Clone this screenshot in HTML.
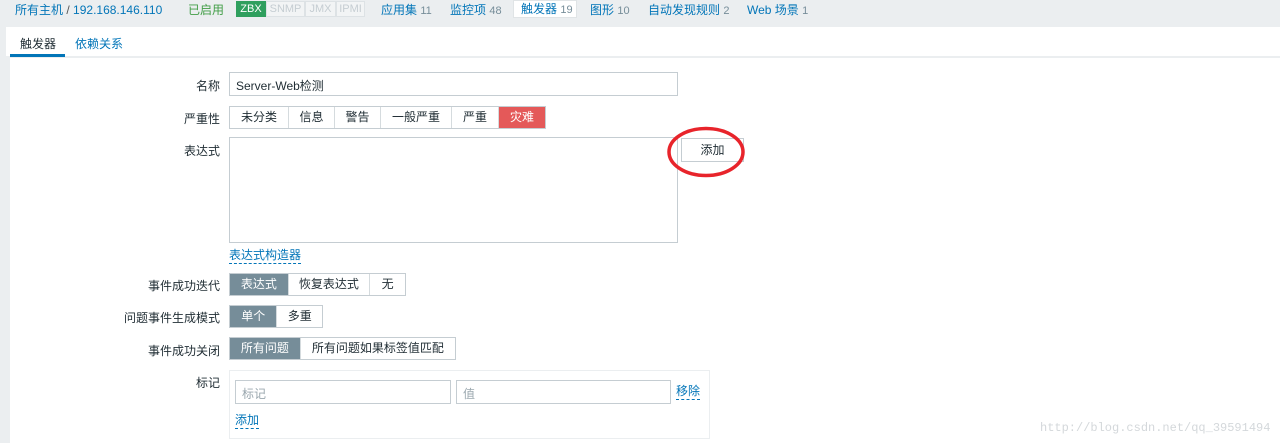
<!DOCTYPE html>
<html><head><meta charset="utf-8"><style>
*{box-sizing:border-box;margin:0;padding:0}
body{width:1280px;height:443px;overflow:hidden;background:#ebeef0;font-family:"Liberation Sans","Noto Sans CJK SC",sans-serif;font-size:12px;color:#1f2c33;position:relative}
.a{position:absolute;white-space:nowrap}
.lnk{color:#0275b8}
.n{color:#768d99;font-size:11px}
.lab{position:absolute;right:1060px;text-align:right}
.box{position:absolute;border:1px solid #c5cdd2;background:#fff}
.seg{position:absolute;height:23px;display:flex;border:1px solid #c5cdd2;background:#fff}
.seg span{border-right:1px solid #d5dbde;line-height:21px;text-align:center;display:block}
.seg span:last-child{border-right:0}
.on{background:#768d99;color:#fff}
</style></head><body>
<div class="a" style="top:2px;left:15px;line-height:16px">
<span class="lnk">所有主机</span> <span style="color:#555">/</span> <span class="lnk">192.168.146.110</span></div>
<div class="a" style="top:2px;left:188px;color:#429e47;line-height:16px">已启用</div>
<div class="a" style="top:1px;left:236px;height:16px;display:flex;font-size:11px;line-height:14px">
<span style="background:#2f9f5e;color:#fff;width:30px;text-align:center;border:1px solid #2f9f5e">ZBX</span>
<span style="color:#c5cdd2;border:1px solid #dde2e5;width:39px;text-align:center;background:#f2f4f5">SNMP</span>
<span style="color:#c5cdd2;border:1px solid #dde2e5;width:31px;text-align:center;background:#f2f4f5">JMX</span>
<span style="color:#c5cdd2;border:1px solid #dde2e5;width:29px;text-align:center;background:#f2f4f5">IPMI</span></div>
<div class="a lnk" style="top:2px;left:381px;line-height:16px">应用集 <span class="n">11</span></div>
<div class="a lnk" style="top:2px;left:450px;line-height:16px">监控项 <span class="n">48</span></div>
<div class="a" style="top:0px;left:513px;width:64px;height:18px;background:#fff;border:1px solid #e0e4e6;padding-left:7px;line-height:16px"><span class="lnk">触发器</span> <span class="n">19</span></div>
<div class="a lnk" style="top:2px;left:590px;line-height:16px">图形 <span class="n">10</span></div>
<div class="a lnk" style="top:2px;left:648px;line-height:16px">自动发现规则 <span class="n">2</span></div>
<div class="a lnk" style="top:2px;left:747px;line-height:16px">Web 场景 <span class="n">1</span></div>

<div class="a" style="top:27px;left:6px;width:1274px;height:30px;background:#fff;border-bottom:1px solid #ebeef0"></div>
<div class="a" style="top:35px;left:20px">触发器</div>
<div class="a" style="top:54px;left:10px;width:55px;height:3px;background:#0275b8"></div>
<div class="a lnk" style="top:35px;left:75px">依赖关系</div>
<div class="a" style="top:58px;left:10px;width:1270px;height:385px;background:#fff"></div>

<div class="lab" style="top:77px">名称</div>
<div class="box" style="left:229px;top:72px;width:449px;height:24px;padding:4px 6px">Server-Web检测</div>
<div class="lab" style="top:110px">严重性</div>
<div class="seg" style="left:229px;top:106px;width:317px">
<span style="width:59px">未分类</span><span style="width:46px">信息</span><span style="width:46px">警告</span><span style="width:71px">一般严重</span><span style="width:47px">严重</span><span style="width:46px;background:#e45959;color:#fff">灾难</span></div>
<div class="lab" style="top:142px">表达式</div>
<div class="box" style="left:229px;top:137px;width:449px;height:106px"></div>
<div class="box" style="left:681px;top:138px;width:63px;height:24px;text-align:center;line-height:22px;border-color:#c5cdd2">添加</div>
<svg class="a" style="left:665px;top:125px" width="82" height="54"><ellipse cx="41" cy="27" rx="37" ry="23.5" fill="none" stroke="#e8242b" stroke-width="3.5"/></svg>
<div class="a lnk" style="left:229px;top:248px;border-bottom:1px dashed #0275b8;line-height:15px">表达式构造器</div>

<div class="lab" style="top:277px">事件成功迭代</div>
<div class="seg" style="left:229px;top:273px;width:177px"><span class="on" style="width:59px">表达式</span><span style="width:82px">恢复表达式</span><span style="width:35px">无</span></div>
<div class="lab" style="top:309px">问题事件生成模式</div>
<div class="seg" style="left:229px;top:305px;width:94px"><span class="on" style="width:48px">单个</span><span style="width:45px">多重</span></div>
<div class="lab" style="top:342px">事件成功关闭</div>
<div class="seg" style="left:229px;top:337px;width:227px"><span class="on" style="width:71px">所有问题</span><span style="width:155px">所有问题如果标签值匹配</span></div>

<div class="lab" style="top:374px">标记</div>
<div class="a" style="left:229px;top:370px;width:481px;height:69px;border:1px solid #ebeef0"></div>
<div class="box" style="left:235px;top:380px;width:216px;height:24px;padding:4px 6px;color:#9aa7ae">标记</div>
<div class="box" style="left:456px;top:380px;width:215px;height:24px;padding:4px 6px;color:#9aa7ae">值</div>
<div class="a lnk" style="left:676px;top:384px;border-bottom:1px dashed #0275b8;line-height:15px">移除</div>
<div class="a lnk" style="left:235px;top:413px;border-bottom:1px dashed #0275b8;line-height:15px">添加</div>
<div class="a" style="left:1040px;top:421px;font-family:'Liberation Mono',monospace;font-size:12px;color:#d4d8db">http://blog.csdn.net/qq_39591494</div>
</body></html>
